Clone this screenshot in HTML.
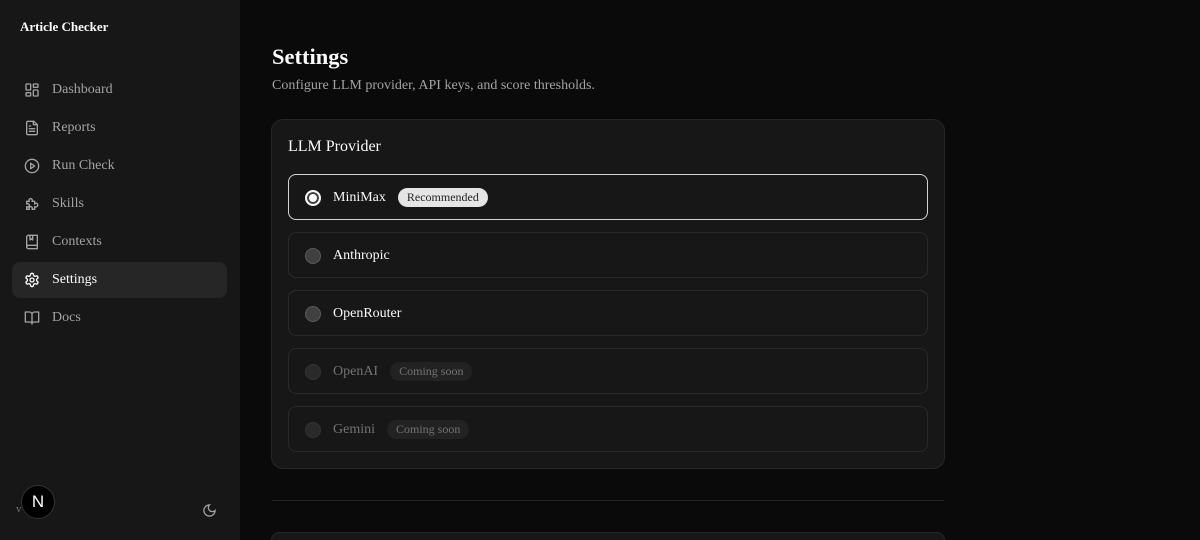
<!DOCTYPE html>
<html style="overflow:hidden;height:540px"><head><style>
*{margin:0;padding:0;box-sizing:border-box}
body{width:1200px;height:540px;overflow:hidden;background:#0a0a0a;font-family:"Liberation Serif",serif;color:#fafafa;position:relative}
.side{position:absolute;left:0;top:0;width:240px;height:540px;background:#171717}
.brand{position:absolute;left:20px;top:19px;font-size:13px;font-weight:bold;color:#fafafa}
.nav{position:absolute;left:12px;top:72px;width:215px}
.item{height:36px;margin-bottom:2px;display:flex;align-items:center;padding-left:12px;font-size:14px;color:#a3a3a3;border-radius:8px}
.item svg{width:16px;height:16px;margin-right:12px;stroke:#a3a3a3;fill:none;stroke-width:2;stroke-linecap:round;stroke-linejoin:round}
.item.act{background:#262626;color:#fafafa}
.item.act svg{stroke:#fafafa}
.av{position:absolute;left:21px;top:485px;width:34px;height:34px;border-radius:50%;background:#000;border:1px solid #333;color:#fff;font:17px "Liberation Sans",sans-serif;display:flex;align-items:center;justify-content:center}
h1{position:absolute;left:272px;top:44px;font-size:22.5px;font-weight:bold}
.sub{position:absolute;left:272px;top:78px;font-size:14px;color:#a3a3a3}
.card{position:absolute;left:271px;top:119px;width:674px;height:350px;background:#171717;border:1px solid #262626;border-radius:12px}
.card h2{position:absolute;left:16px;top:18px;font-size:16px;font-weight:normal}
.opt{position:absolute;left:16px;width:640px;height:46px;border:1px solid #2a2a2a;border-radius:8px;display:flex;align-items:center;padding-left:16px;font-size:14px;padding-top:1px}
.opt.sel{border-color:#d4d4d4}
.r{width:16px;height:16px;border-radius:50%;background:#404040;border:1px solid #5a5a5a;margin-right:12px}
.sel .r{background:#fafafa;border:2px solid #fafafa;box-shadow:inset 0 0 0 2px #404040}
.dis{color:#737373}
.dis .r{background:#2a2a2a;border-color:#333}
.b{margin-left:12px;padding:2px 9px;border-radius:10px;font-size:12px}
.rec{background:#e5e5e5;color:#262626}
.cs{background:#222;color:#737373}
hr{position:absolute;left:272px;top:500px;width:672px;border:0;border-top:1px solid #262626}
.card2{position:absolute;left:271px;top:532px;width:674px;height:8px;background:#171717;border:1px solid #262626;border-bottom:0;border-radius:12px 12px 0 0}
</style></head><body>
<div class="side">
<div class="brand">Article Checker</div>
<div class="nav">
<div class="item"><svg viewBox="0 0 24 24"><rect x="3" y="3" width="7" height="9" rx="1"/><rect x="14" y="3" width="7" height="5" rx="1"/><rect x="14" y="12" width="7" height="9" rx="1"/><rect x="3" y="16" width="7" height="5" rx="1"/></svg>Dashboard</div>
<div class="item"><svg viewBox="0 0 24 24"><path d="M15 2H6a2 2 0 0 0-2 2v16a2 2 0 0 0 2 2h12a2 2 0 0 0 2-2V7z"/><path d="M14 2v5h6M16 13H8M16 17H8M10 9H8"/></svg>Reports</div>
<div class="item"><svg viewBox="0 0 24 24"><circle cx="12" cy="12" r="10"/><path d="M10 8l6 4-6 4z"/></svg>Run Check</div>
<div class="item"><svg viewBox="0 0 24 24"><path d="M19.4 15.5a2.5 2.5 0 1 0-3.4-3.4V8h-4a2.5 2.5 0 1 0-4 0H4v4a2.5 2.5 0 1 1 0 4v4h4a2.5 2.5 0 1 1 4 0h4v-4a2.5 2.5 0 0 0 3.4-.5z"/></svg>Skills</div>
<div class="item"><svg viewBox="0 0 24 24"><path d="M4 19.5v-15A2.5 2.5 0 0 1 6.5 2H20v20H6.5a2.5 2.5 0 0 1 0-5H20"/><path d="M9 2v7l2-2 2 2V2"/></svg>Contexts</div>
<div class="item act"><svg viewBox="0 0 24 24"><circle cx="12" cy="12" r="3"/><path d="M12.2 2h-.4a2 2 0 0 0-2 2v.2a2 2 0 0 1-1 1.7l-.4.3a2 2 0 0 1-2 0l-.2-.1a2 2 0 0 0-2.7.7l-.2.4a2 2 0 0 0 .7 2.7l.2.1a2 2 0 0 1 1 1.7v.5a2 2 0 0 1-1 1.7l-.2.1a2 2 0 0 0-.7 2.7l.2.4a2 2 0 0 0 2.7.7l.2-.1a2 2 0 0 1 2 0l.4.3a2 2 0 0 1 1 1.7v.2a2 2 0 0 0 2 2h.4a2 2 0 0 0 2-2v-.2a2 2 0 0 1 1-1.7l.4-.3a2 2 0 0 1 2 0l.2.1a2 2 0 0 0 2.7-.7l.2-.4a2 2 0 0 0-.7-2.7l-.2-.1a2 2 0 0 1-1-1.7v-.5a2 2 0 0 1 1-1.700l.2-.1a2 2 0 0 0 .7-2.7l-.2-.4a2 2 0 0 0-2.7-.7l-.2.1a2 2 0 0 1-2 0l-.4-.3a2 2 0 0 1-1-1.7V4a2 2 0 0 0-2-2z"/></svg>Settings</div>
<div class="item"><svg viewBox="0 0 24 24"><path d="M2 3h6a4 4 0 0 1 4 4v14a3 3 0 0 0-3-3H2zM22 3h-6a4 4 0 0 0-4 4v14a3 3 0 0 1 3-3h7z"/></svg>Docs</div>
</div>
<div style="position:absolute;left:16px;top:503px;font-size:11px;color:#737373">v</div>
<div class="av">N</div>
<svg style="position:absolute;left:202px;top:503px" width="15" height="15" viewBox="0 0 24 24" fill="none" stroke="#a3a3a3" stroke-width="2"><path d="M12 3a6 6 0 0 0 9 9 9 9 0 1 1-9-9z"/></svg>
</div>
<h1>Settings</h1>
<div class="sub">Configure LLM provider, API keys, and score thresholds.</div>
<div class="card">
<h2>LLM Provider</h2>
<div class="opt sel" style="top:54px"><span class="r"></span>MiniMax<span class="b rec">Recommended</span></div>
<div class="opt" style="top:112px"><span class="r"></span>Anthropic</div>
<div class="opt" style="top:170px"><span class="r"></span>OpenRouter</div>
<div class="opt dis" style="top:228px"><span class="r"></span>OpenAI<span class="b cs">Coming soon</span></div>
<div class="opt dis" style="top:286px"><span class="r"></span>Gemini<span class="b cs">Coming soon</span></div>
</div>
<hr>
<div class="card2"></div>
</body></html>
